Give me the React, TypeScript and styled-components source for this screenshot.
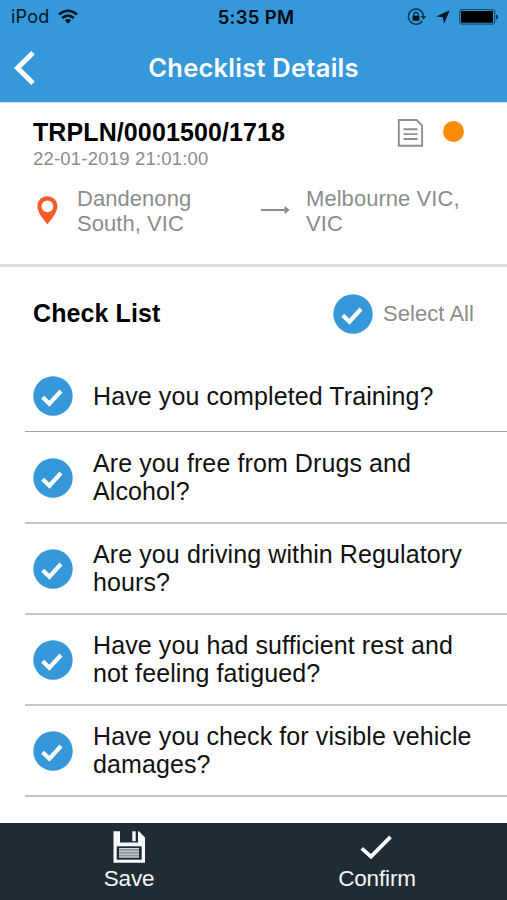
import React from "react";
import styled, { createGlobalStyle } from "styled-components";

const GlobalStyle = createGlobalStyle`
  * { box-sizing: border-box; }
  body { margin: 0; background: #fff; }
`;

const Screen = styled.div`
  width: 507px;
  height: 900px;
  display: flex;
  flex-direction: column;
  overflow: hidden;
  background: #fff;
  color: #111;
  font-family: "Liberation Sans", Arial, sans-serif;
`;

const Header = styled.header`
  height: 102px;
  flex: none;
  background: #3498db;
`;

const StatusBar = styled.div`
  height: 34px;
  display: grid;
  grid-template-columns: 1fr auto 1fr;
  align-items: center;
  padding: 0 9px 0 11px;
  color: #06151f;
  font-family: Inter, sans-serif;
`;

const StatusGroup = styled.div<{ $end?: boolean }>`
  display: flex;
  align-items: center;
  gap: 9px;
  justify-content: ${(p) => (p.$end ? "flex-end" : "flex-start")};
`;

const Carrier = styled.span`
  font-size: 18px;
  line-height: 34px;
  letter-spacing: 0.2px;
`;

const Clock = styled.span`
  font-size: 18.5px;
  font-weight: 600;
  line-height: 34px;
  letter-spacing: 0.3px;
  padding-left: 3px;
  color: #03090d;
`;

const NavBar = styled.div`
  height: 68px;
  display: grid;
  grid-template-columns: 40px 1fr 40px;
  align-items: center;
`;

const BackButton = styled.button`
  border: 0;
  padding: 0 0 0 13px;
  background: none;
  display: flex;
`;

const Title = styled.h1`
  margin: 0;
  text-align: center;
  color: #fff;
  font: 600 25.5px/34px Inter, sans-serif;
  letter-spacing: 0.25px;
`;

const Trip = styled.section`
  height: 165px;
  flex: none;
  padding: 16px 0 0 33px;
  border-top: 1px solid #d5e4ef;
  border-bottom: 3px solid #dedede;
`;

const TripTop = styled.div`
  display: flex;
  height: 52px;
`;

const TripInfo = styled.div`
  width: 364px;
`;

const TripNumber = styled.h2`
  margin: 0;
  font-size: 25px;
  line-height: 27px;
  letter-spacing: 0.1px;
  color: #000;
`;

const TripDate = styled.div`
  font-size: 18.5px;
  line-height: 24px;
  letter-spacing: 0.2px;
  padding-top: 1px;
  color: #8c8c8c;
`;

const StatusDot = styled.span`
  width: 21px;
  height: 21px;
  margin: 2px 0 0 19px;
  border-radius: 50%;
  background: #ff8c00;
`;

const Route = styled.div`
  display: grid;
  grid-template-columns: 44px 184px 45px 1fr;
  margin-top: 15px;
`;

const RouteIcon = styled.span<{ $top: number; $left: number }>`
  padding: ${(p) => p.$top}px 0 0 ${(p) => p.$left}px;
`;

const Place = styled.div`
  font-size: 22px;
  line-height: 25px;
  letter-spacing: 0.05px;
  color: #8c8c8c;
`;

const ListHeader = styled.div`
  height: 93px;
  flex: none;
  padding: 0 33px;
  display: flex;
  align-items: center;
  justify-content: space-between;
`;

const ListTitle = styled.h2`
  margin: 0 0 2px;
  font-size: 25px;
  line-height: 28px;
  letter-spacing: 0.1px;
  color: #000;
`;

const SelectAll = styled.div`
  display: flex;
  align-items: center;
  gap: 10px;
  font-size: 22px;
  line-height: 26px;
  letter-spacing: 0.05px;
  color: #8c8c8c;
`;

const List = styled.ul`
  flex: 1;
  margin: 0;
  padding: 0 0 0 25px;
  list-style: none;
`;

const Item = styled.li<{ $first: boolean }>`
  height: ${(p) => (p.$first ? 72 : 91)}px;
  margin-bottom: ${(p) => (p.$first ? 1 : 0)}px;
  display: flex;
  align-items: center;
  gap: 20.5px;
  padding-left: 7.5px;
  border-bottom: ${(p) => (p.$first ? "1px solid #a3a3a3" : "2px solid #c6c6c6")};
`;

const Question = styled.span<{ $first: boolean }>`
  width: 400px;
  padding-bottom: ${(p) => (p.$first ? 0 : 1)}px;
  font-size: 25px;
  line-height: 28px;
  letter-spacing: 0.1px;
  white-space: pre-line;
`;

const Footer = styled.footer`
  height: 77px;
  flex: none;
  display: grid;
  grid-template-columns: 258px 238px;
  background: #212b34;
`;

const FooterButton = styled.button`
  border: 0;
  padding: 7px 0 0;
  background: none;
  display: flex;
  flex-direction: column;
  align-items: center;
  gap: 1px;
  color: #f3f6f8;
  font: 22.5px/28px "Liberation Sans", Arial, sans-serif;
  letter-spacing: -0.15px;
`;

const CheckCircle = () => (
  <svg width="40" height="40" viewBox="0 0 40 40">
    <circle cx="20" cy="20" r="19.7" fill="#3498db" />
    <path d="M9.7 21.3 16.4 27.7 28 15" fill="none" stroke="#fff" strokeWidth="4.1" />
  </svg>
);

const WifiIcon = () => (
  <svg width="20" height="16" viewBox="0 0 20 16">
    <g fill="none" stroke="#06151f" strokeWidth="2.5">
      <path d="M1 5.5Q10-2 19 5.5" />
      <path d="M4.2 9Q10 4.2 15.8 9" />
    </g>
    <path d="M6.8 11.3Q10 8.9 13.2 11.3L10 14.8Z" fill="#06151f" />
  </svg>
);

const RotationLockIcon = () => (
  <svg width="20" height="18" viewBox="0 0 20 18">
    <path d="M15.3 12.8A7.6 7.6 0 1 1 16.5 8" fill="none" stroke="#0c2e46" strokeWidth="1.3" />
    <path d="M13.6 8h5.8l-2.9 3.5z" fill="#0c2e46" />
    <rect x="5.6" y="7.7" width="6.8" height="5" rx=".5" fill="#06151f" />
    <path d="M7 8V6.4a2 2 0 0 1 4 0V8" fill="none" stroke="#06151f" strokeWidth="1.1" />
  </svg>
);

const LocationIcon = () => (
  <svg width="14" height="14" viewBox="0 0 14 14">
    <path d="M13.8.2 8 13.8 6.9 7.2 .2 6.4Z" fill="#06151f" />
  </svg>
);

const BatteryIcon = () => (
  <svg width="39" height="16" viewBox="0 0 39 16">
    <rect x=".7" y=".7" width="35" height="14.4" rx="2.5" fill="none" stroke="#195074" strokeWidth="1.2" />
    <rect x="2" y="2" width="32" height="11.8" rx="1" fill="#000" />
    <path d="M37 5.2q2 .5 2 2.7t-2 2.7z" fill="#0c2e46" />
  </svg>
);

const BackIcon = () => (
  <svg width="22" height="34" viewBox="0 0 22 34">
    <path d="M20 1.8 4.5 17 20 32.2" fill="none" stroke="#fff" strokeWidth="5" />
  </svg>
);

const DocumentIcon = () => (
  <svg width="27" height="30" viewBox="0 0 27 30">
    <g fill="none" stroke="#8e8e8e" strokeWidth="1.9">
      <path d="M1.8 1h17.9l5.4 5.6v20.2H1.8z" />
      <path d="M6.5 10.3h14M6.5 15.1h14M6.5 20h14" />
    </g>
  </svg>
);

const PinIcon = () => (
  <svg width="21" height="29" viewBox="0 0 21 29">
    <path
      d="M10.4.3C4.8.3.4 4.6.4 10.1c0 6.8 5.6 12.2 10 18.5 4.4-6.3 10-11.7 10-18.5C20.4 4.6 16 .3 10.4.3Zm0 4.2a5.9 5.9 0 1 1 0 11.8 5.9 5.9 0 0 1 0-11.8Z"
      fill="#ff5a26"
    />
  </svg>
);

const ArrowIcon = () => (
  <svg width="29" height="10" viewBox="0 0 29 10">
    <path d="M0 5h25" stroke="#8c8c8c" strokeWidth="2" />
    <path d="M23.6.8 28.6 5l-5 4.2z" fill="#8c8c8c" />
  </svg>
);

const SaveIcon = () => (
  <svg width="34" height="34" viewBox="0 1 34 34">
    <path d="M1.5 2.3H8v11.3h18V2.3h1l6 6.2v25.3H1.5z" fill="#f5fafc" />
    <rect x="20.3" y="2.3" width="3.4" height="9.8" fill="#f5fafc" />
    <rect x="4.7" y="17.3" width="25" height="13.4" fill="#212b34" />
    <rect x="7" y="19" width="20" height="9.6" fill="#8d969b" />
    <path d="M7 19.5h20M7 22.3h20M7 25.2h20M7 28h20" stroke="#d4dadd" strokeWidth="1" />
  </svg>
);

const ConfirmIcon = () => (
  <svg width="34" height="34" viewBox="0 1 34 34">
    <path d="M1.8 19.3 11 27.6 30.5 7.8" fill="none" stroke="#fff" strokeWidth="3.8" />
  </svg>
);

const questions = [
  "Have you completed Training?",
  "Are you free from Drugs and\nAlcohol?",
  "Are you driving within Regulatory\nhours?",
  "Have you had sufficient rest and\nnot feeling fatigued?",
  "Have you check for visible vehicle\ndamages?",
];

export default function App() {
  return (
    <>
      <GlobalStyle />
      <Screen>
        <Header>
          <StatusBar>
            <StatusGroup>
              <Carrier>iPod</Carrier>
              <WifiIcon />
            </StatusGroup>
            <Clock>5:35 PM</Clock>
            <StatusGroup $end>
              <RotationLockIcon />
              <LocationIcon />
              <BatteryIcon />
            </StatusGroup>
          </StatusBar>
          <NavBar>
            <BackButton aria-label="Back">
              <BackIcon />
            </BackButton>
            <Title>Checklist Details</Title>
          </NavBar>
        </Header>
        <Trip>
          <TripTop>
            <TripInfo>
              <TripNumber>TRPLN/0001500/1718</TripNumber>
              <TripDate>22-01-2019 21:01:00</TripDate>
            </TripInfo>
            <DocumentIcon />
            <StatusDot />
          </TripTop>
          <Route>
            <RouteIcon $top={10} $left={4}>
              <PinIcon />
            </RouteIcon>
            <Place>
              Dandenong
              <br />
              South, VIC
            </Place>
            <RouteIcon $top={15} $left={0}>
              <ArrowIcon />
            </RouteIcon>
            <Place>
              Melbourne VIC,
              <br />
              VIC
            </Place>
          </Route>
        </Trip>
        <ListHeader>
          <ListTitle>Check List</ListTitle>
          <SelectAll>
            <CheckCircle />
            Select All
          </SelectAll>
        </ListHeader>
        <List>
          {questions.map((q, i) => (
            <Item key={q} $first={i === 0}>
              <CheckCircle />
              <Question $first={i === 0}>{q}</Question>
            </Item>
          ))}
        </List>
        <Footer>
          <FooterButton>
            <SaveIcon />
            Save
          </FooterButton>
          <FooterButton>
            <ConfirmIcon />
            Confirm
          </FooterButton>
        </Footer>
      </Screen>
    </>
  );
}
